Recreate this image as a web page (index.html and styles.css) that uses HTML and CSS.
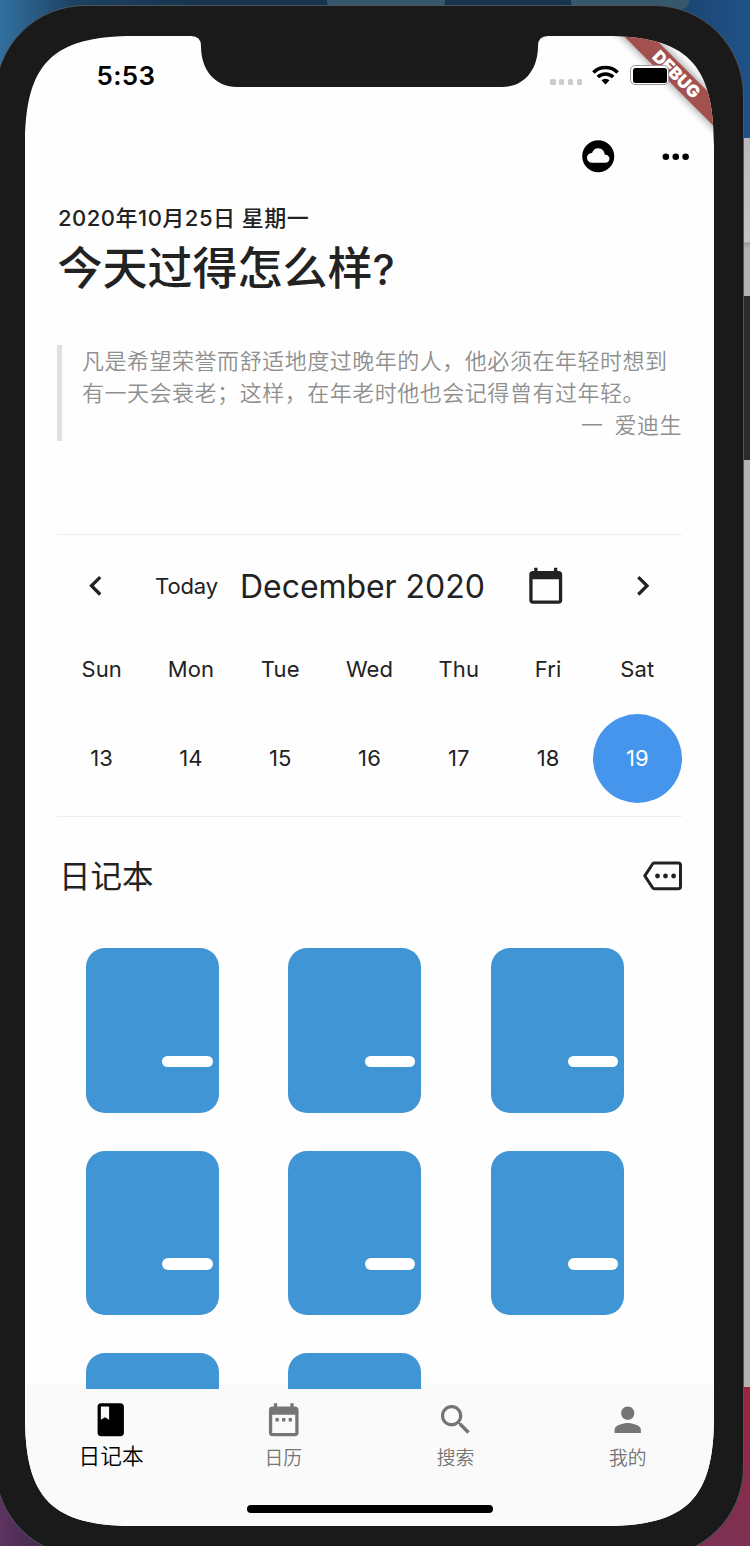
FILE: index.html
```html
<!DOCTYPE html>
<html lang="zh-CN">
<head>
<meta charset="utf-8">
<title>日记本</title>
<link rel="stylesheet" href="styles.css">
</head>
<body>
<div class="desktop">
  <div class="window-tab tab-a"></div>
  <div class="window-tab tab-b"></div>
  <div class="back-window"></div>
  <div class="power-button"></div>
  <div class="phone">
    <div class="screen">
      <div class="debug-banner">DEBUG</div>
      <header class="status-bar">
        <span class="clock">5:53</span>
        <div class="status-icons">
          <div class="signal"><i></i><i></i><i></i><i></i></div>
          <svg class="wifi" viewBox="0 0 27 20"><g fill="none" stroke="#000" stroke-width="3.5"><path d="M1.4 7.4a17.2 17.2 0 0 1 24.2 0"/><path d="M5.8 12.1a10.9 10.9 0 0 1 15.4 0"/></g><path d="M13.5 19.4l4-4.1a5.7 5.7 0 0 0-8 0z"/></svg>
          <div class="battery"><div class="charge"></div></div>
        </div>
      </header>
      <div class="app-bar">
        <svg class="cloud" viewBox="0 0 24 24"><path d="M12 2C6.48 2 2 6.48 2 12s4.48 10 10 10 10-4.48 10-10S17.52 2 12 2zm4.5 14H8c-1.66 0-3-1.34-3-3s1.34-3 3-3l.14.01C8.58 8.28 10.13 7 12 7c2.21 0 4 1.79 4 4h.5c1.38 0 2.5 1.12 2.5 2.5S17.88 16 16.5 16z"/></svg>
        <svg class="more" viewBox="0 0 24 24"><circle cx="6" cy="12" r="2"/><circle cx="12" cy="12" r="2"/><circle cx="18" cy="12" r="2"/></svg>
      </div>
      <main class="content">
        <div class="date">2020年10月25日 星期一</div>
        <h1 class="title">今天过得怎么样<span class="mark">?</span></h1>
        <blockquote class="quote">
          <p>凡是希望荣誉而舒适地度过晚年的人，他必须在年轻时想到<br>有一天会衰老；这样，在年老时他也会记得曾有过年轻。</p>
          <p class="author">一&nbsp; 爱迪生</p>
        </blockquote>
        <section class="calendar">
          <div class="calendar-head">
            <svg class="icon" viewBox="0 0 24 24"><path d="M15.41 7.41L14 6l-6 6 6 6 1.41-1.41L10.83 12z"/></svg>
            <span class="today">Today</span>
            <span class="month">December 2020</span>
            <svg class="icon" viewBox="0 0 24 24"><path d="M20 3h-1V1h-2v2H7V1H5v2H4c-1.1 0-2 .9-2 2v16c0 1.1.9 2 2 2h16c1.1 0 2-.9 2-2V5c0-1.1-.9-2-2-2zm0 18H4V8h16v13z"/></svg>
            <svg class="icon next" viewBox="0 0 24 24"><path d="M10 6L8.59 7.41 13.17 12l-4.58 4.59L10 18l6-6z"/></svg>
          </div>
          <div class="week names"><span>Sun</span><span>Mon</span><span>Tue</span><span>Wed</span><span>Thu</span><span>Fri</span><span>Sat</span></div>
          <div class="week days"><span>13</span><span>14</span><span>15</span><span>16</span><span>17</span><span>18</span><span class="selected">19</span></div>
        </section>
        <div class="section-head">
          <h2>日记本</h2>
          <svg class="tag" viewBox="0 0 40 30"><path d="M11.3 2H35.2Q37.5 2 37.5 4.3V25.4Q37.5 27.7 35.2 27.7H11.3Q10.3 27.7 9.7 26.9L1.8 14.85 9.7 2.8Q10.3 2 11.3 2Z" fill="none" stroke="#222" stroke-width="3"/><g fill="#222"><circle cx="14.5" cy="15" r="2.4"/><circle cx="22.5" cy="15" r="2.4"/><circle cx="30.6" cy="15" r="2.4"/></g></svg>
        </div>
        <div class="books">
          <div class="book"></div><div class="book"></div><div class="book"></div>
          <div class="book"></div><div class="book"></div><div class="book"></div>
          <div class="book"></div><div class="book"></div>
        </div>
      </main>
      <nav class="tabs">
        <div class="tab active">
          <svg class="icon" viewBox="0 0 24 24"><path d="M18 2H6c-1.1 0-2 .9-2 2v16c0 1.1.9 2 2 2h12c1.1 0 2-.9 2-2V4c0-1.1-.9-2-2-2zM6 4h5v8l-2.5-1.5L6 12V4z"/></svg>
          <span>日记本</span>
        </div>
        <div class="tab">
          <svg class="icon" viewBox="0 0 24 24"><path d="M9 11H7v2h2v-2zm4 0h-2v2h2v-2zm4 0h-2v2h2v-2zm2-7h-1V2h-2v2H8V2H6v2H5c-1.11 0-1.99.9-1.99 2L3 20c0 1.1.89 2 2 2h14c1.1 0 2-.9 2-2V6c0-1.1-.9-2-2-2zm0 16H5V9h14v11z"/></svg>
          <span>日历</span>
        </div>
        <div class="tab">
          <svg class="icon" viewBox="0 0 24 24"><path d="M15.5 14h-.79l-.28-.27C15.41 12.59 16 11.11 16 9.5 16 5.91 13.09 3 9.5 3S3 5.91 3 9.5 5.91 16 9.5 16c1.61 0 3.09-.59 4.23-1.57l.27.28v.79l5 4.99L20.49 19l-4.99-5zm-6 0C7.01 14 5 11.99 5 9.5S7.01 5 9.5 5 14 7.01 14 9.5 11.99 14 9.5 14z"/></svg>
          <span>搜索</span>
        </div>
        <div class="tab">
          <svg class="icon" viewBox="0 0 24 24"><path d="M12 12c2.21 0 4-1.79 4-4s-1.79-4-4-4-4 1.79-4 4 1.79 4 4 4zm0 2c-2.67 0-8 1.34-8 4v2h16v-2c0-2.66-5.33-4-8-4z"/></svg>
          <span>我的</span>
        </div>
      </nav>
      <div class="home-indicator"></div>
    </div>
  </div>
</div>
</body>
</html>
```

FILE: styles.css
```css
* { box-sizing: border-box; margin: 0; padding: 0; }
body {
  font-family: Inter, "Noto Sans CJK SC", sans-serif;
  color: #222;
  overflow: hidden;
}
.desktop {
  position: relative;
  width: 750px;
  height: 1546px;
  overflow: hidden;
  background:
    linear-gradient(90deg, #5d3360 0, #3f2a4c 45px, transparent 45px) 0 1400px / 750px 146px no-repeat,
    linear-gradient(#9b2540, #7c3152) 650px 1380px / 100px 166px no-repeat,
    linear-gradient(90deg, #3270a0 0, #1d4162 75px, #16324d 200px, #16324d 560px, #1b4673 690px, #205288 750px);
}
.window-tab { position: absolute; top: 0; height: 9px; background: #35586d; border-radius: 0 0 7px 7px; }
.tab-a { left: 327px; width: 118px; }
.tab-b { left: 571px; width: 118px; }
.back-window {
  position: absolute;
  left: 640px; top: 138px;
  width: 130px; height: 1249px;
  background: linear-gradient(#bdb8bb 0, #c4c2c4 104px, #999 105px, #b2b2b2 110px);
}
.power-button { position: absolute; left: 738px; top: 296px; width: 14px; height: 164px; background: #2b2b2b; border-radius: 2px; }

.phone {
  position: absolute;
  left: -5px; top: 5px;
  width: 749px; height: 1552px;
  padding: 30px 29px;
  border: 1px solid #4d565e;
  border-radius: 90px;
  background: #1a1a1a;
}
.screen {
  position: relative;
  display: flex;
  flex-direction: column;
  width: 689px; height: 1490px;
  overflow: hidden;
  background: #fefefe;
  clip-path: path("M110 0H166Q176 0 176 10C176 34 190 51 212 51H477C499 51 513 34 513 10Q513 0 523 0H579C662 0 689 27 689 110V1380C689 1463 662 1490 579 1490H110C27 1490 0 1463 0 1380V110C0 27 27 0 110 0Z");
}
.debug-banner {
  position: absolute;
  left: 541px; top: 28px;
  width: 220px; height: 20px;
  background: #a3514e;
  box-shadow: 0 0 10px rgba(0, 0, 0, .5);
  color: #fff;
  font-size: 17px; font-weight: 900; line-height: 20px;
  text-align: center;
  text-indent: 1px;
  transform: rotate(45deg);
}
.status-bar {
  position: relative;
  display: flex;
  justify-content: space-between;
  height: 80px;
  padding: 0 45px 0 71.5px;
}
.clock { padding-top: 24px; font-size: 26px; font-weight: 600; line-height: 32px; letter-spacing: .3px; }
.clock, .status-icons { color: #000; }
.status-icons { display: flex; align-items: flex-start; padding-top: 29px; }
.signal { display: flex; gap: 3.6px; margin: 14px 10px 0 0; }
.signal i { width: 5.2px; height: 5.5px; background: #ccc; border-radius: 1.5px; }
.wifi { width: 27px; height: 20px; margin-right: 11px; }
.battery { width: 39px; height: 20px; padding: 1.5px; border: 1.5px solid #999; border-radius: 5px; background: #fff; }
.charge { height: 100%; background: #000; border-radius: 2.5px; }
.app-bar { display: flex; height: 84px; justify-content: flex-end; align-items: center; gap: 38.5px; padding: 0 19px 3px 0; }
.cloud { width: 38.5px; height: 38.5px; }
.more { width: 39.5px; height: 39.5px; }
.content {
  position: relative;
  z-index: 1;
  height: 1189px;
  padding: 0 32px;
  overflow: hidden;
  flex: none;
}
.date { margin-top: 2px; padding-left: 1px; height: 32px; font-size: 22px; font-weight: 450; line-height: 33px; letter-spacing: .5px; }
.title { height: 66px; padding-left: .5px; font-family: "Noto Sans CJK SC", sans-serif; font-size: 45px; font-weight: 500; line-height: 64px; white-space: nowrap; }
.mark { font-family: Inter, sans-serif; font-size: 42px; }
.quote {
  display: flow-root;
  height: 96px;
  margin-top: 45px;
  padding-left: 20px;
  border-left: 5px solid #e0e0e0;
  color: #8f8f8f;
  font-family: "Noto Sans CJK SC", sans-serif;
  font-size: 22px; font-weight: 350; line-height: 32px; letter-spacing: .52px;
  white-space: nowrap;
}
.quote p { margin-top: -2px; }
.quote .author { margin-top: 0; text-align: right; }
.calendar {
  height: 283px;
  margin-top: 93px;
  border-top: 1.5px solid #eee;
  border-bottom: 1.5px solid #eee;
}
.calendar-head {
  display: grid;
  grid-template-columns: 79px 104px 267px 76px auto;
  align-items: center;
  height: 103px;
  padding-left: 19px;
}
.calendar-head .icon { margin-top: -1px; }
.icon { width: 39.5px; height: 39.5px; fill: #222; }
.next { margin-left: 21px; }
.today { padding-bottom: 1px; font-size: 22px; letter-spacing: -.1px; }
.month { margin-left: -19px; font-size: 32px; letter-spacing: -.05px; white-space: nowrap; }
.week { display: grid; grid-template-columns: repeat(7, 1fr); text-align: center; font-size: 22px; letter-spacing: .1px; }
.names { height: 76px; line-height: 63px; }
.days { line-height: 89px; }
.days .selected { color: #fff; background: #4495eb; border-radius: 50%; }
.section-head { display: flex; justify-content: space-between; align-items: center; height: 117px; padding-left: 2px; }
.section-head h2 { padding-bottom: 3px; font-family: "Noto Sans CJK SC", sans-serif; font-size: 31.5px; font-weight: 400; }
.tag { width: 40px; height: 30px; margin-right: -1px; }
.books { display: grid; grid-template-columns: repeat(3, 133px); column-gap: 69.7px; row-gap: 38px; margin: 14px 0 0 28.8px; }
.book {
  display: flex;
  align-items: flex-start;
  justify-content: flex-end;
  height: 164.7px;
  padding: 107.5px 6px 0 0;
  border-radius: 19px;
  background: #4095d5;
}
.book::after { content: ""; width: 50.5px; height: 11.5px; border-radius: 6px; background: #fff; }
.tabs {
  display: flex;
  height: 140px;
  margin-top: -3px;
  padding-top: 13.5px;
  background: #fafafa;
  flex: none;
  box-shadow: 0 -1px 1px rgba(0, 0, 0, .02);
}
.tab { display: flex; flex: 1; flex-direction: column; align-items: center; color: #757575; font-family: "Noto Sans CJK SC", sans-serif; font-weight: 350; font-size: 18.8px; line-height: 30px; }
.tab .icon { fill: #757575; }
.tab span { margin-top: 3px; }
.tab.active { color: #000; font-size: 21.7px; }
.tab.active .icon { fill: #000; }
.tab.active span { margin-top: 1px; }
.home-indicator { position: absolute; left: 222px; top: 1469px; width: 246px; height: 8px; border-radius: 4px; background: #000; }
```
